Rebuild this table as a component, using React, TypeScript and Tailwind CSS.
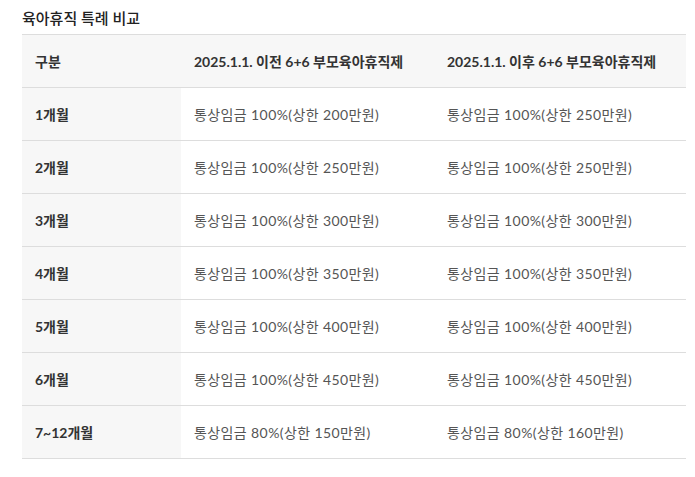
import React from 'react';

const rows = [
  ['1개월', '통상임금 100%(상한 200만원)', '통상임금 100%(상한 250만원)'],
  ['2개월', '통상임금 100%(상한 250만원)', '통상임금 100%(상한 250만원)'],
  ['3개월', '통상임금 100%(상한 300만원)', '통상임금 100%(상한 300만원)'],
  ['4개월', '통상임금 100%(상한 350만원)', '통상임금 100%(상한 350만원)'],
  ['5개월', '통상임금 100%(상한 400만원)', '통상임금 100%(상한 400만원)'],
  ['6개월', '통상임금 100%(상한 450만원)', '통상임금 100%(상한 450만원)'],
  ['7~12개월', '통상임금 80%(상한 150만원)', '통상임금 80%(상한 160만원)'],
];

const App = () => {
  return (
    <div className="w-[695px] h-[477px] bg-white pl-[22px] pr-[9px] pt-[8px] font-['Lato','Noto_Sans_CJK_KR',sans-serif]">
      <h3 className="text-[15px] leading-[20px] font-medium text-[#222] mb-[6px]">육아휴직 특례 비교</h3>

      <div className="border-t border-[#ddd] text-[14px]">
        {/* header */}
        <div className="grid grid-cols-[159px_253px_1fr] h-[53px] bg-[#f7f7f7] border-b border-[#ddd] items-center font-bold text-[#333]">
          <div className="pl-[13px]">구분</div>
          <div className="pl-[13px]">2025.1.1. 이전 6+6 부모육아휴직제</div>
          <div className="pl-[13px]">2025.1.1. 이후 6+6 부모육아휴직제</div>
        </div>

        {rows.map(([month, before, after]) => (
          <div key={month} className="grid grid-cols-[159px_253px_1fr] h-[53px] border-b border-[#ddd]">
            <div className="bg-[#f7f7f7] pl-[13px] flex items-center font-bold text-[#333]">{month}</div>
            <div className="pl-[13px] flex items-center text-[#555] tracking-[0.4px]">{before}</div>
            <div className="pl-[13px] flex items-center text-[#555] tracking-[0.4px]">{after}</div>
          </div>
        ))}
      </div>
    </div>
  );
};

export default App;
